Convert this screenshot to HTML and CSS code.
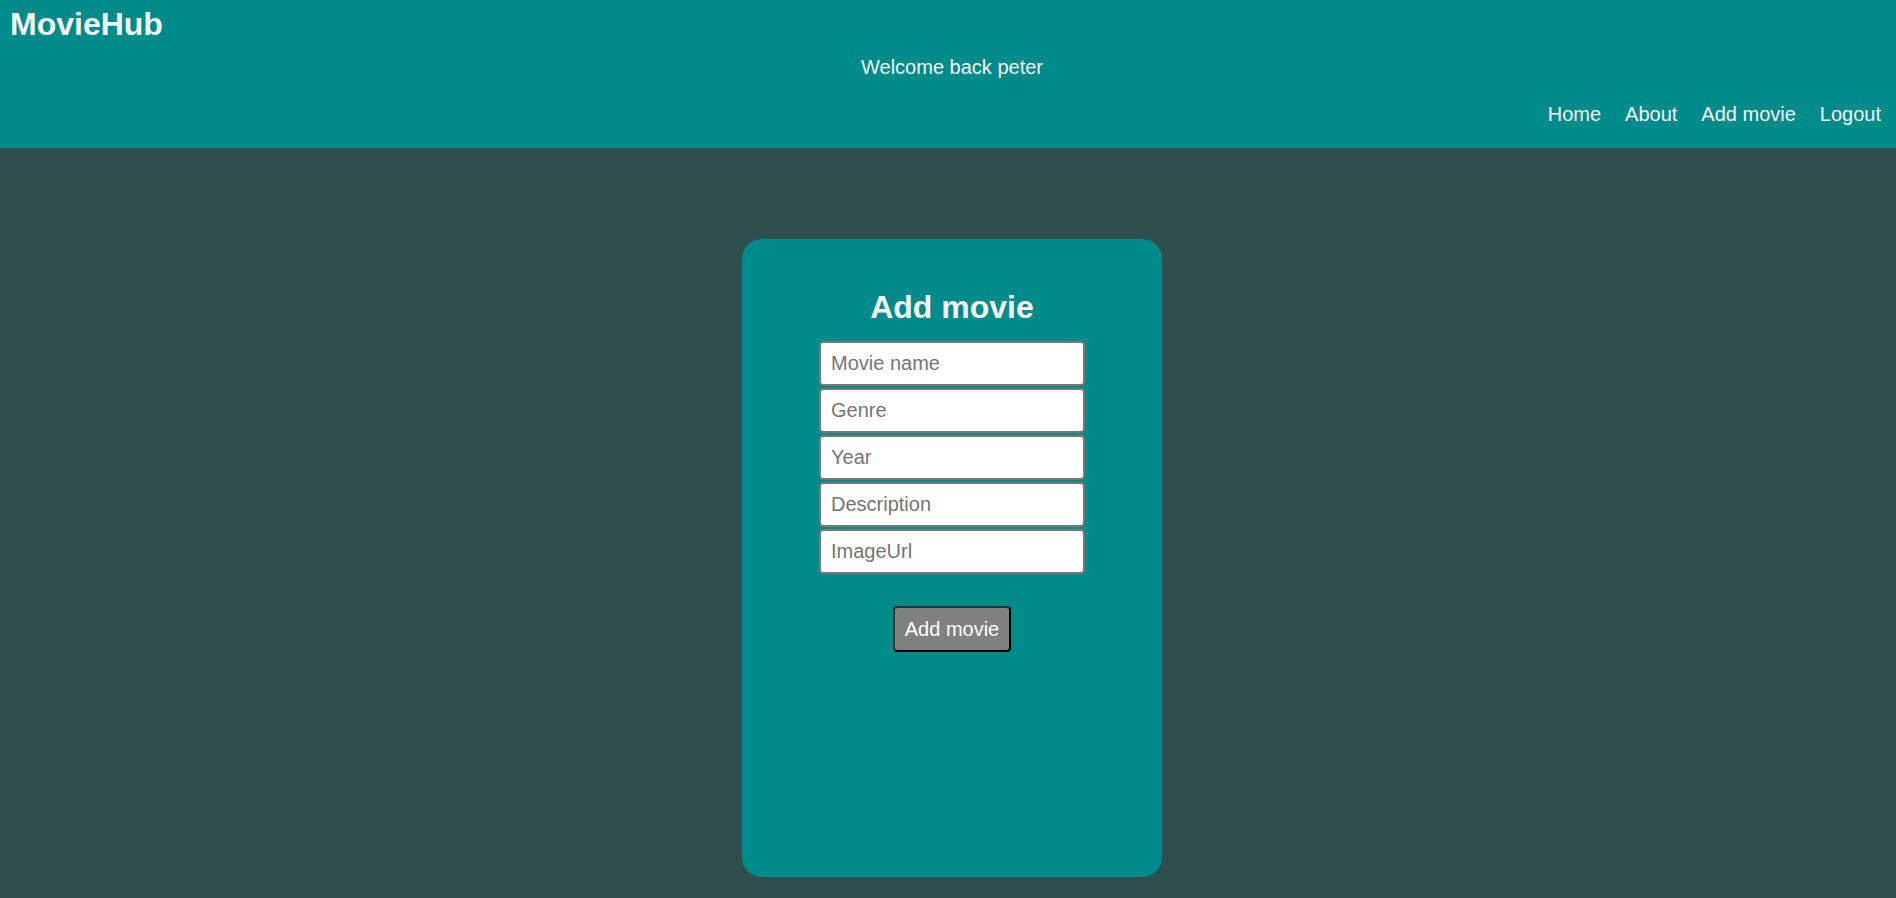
FILE: index.html
```html
<!DOCTYPE html>
<html lang="en">
<head>
<meta charset="utf-8">
<title>MovieHub</title>
<link rel="stylesheet" href="styles.css">
</head>
<body>
<header class="topbar">
  <h1 class="brand">MovieHub</h1>
  <p class="welcome">Welcome back peter</p>
  <nav class="nav">
    <a href="#">Home</a>
    <a href="#">About</a>
    <a href="#">Add movie</a>
    <a href="#">Logout</a>
  </nav>
</header>
<main class="main">
  <section class="card">
    <h2 class="card-title">Add movie</h2>
    <form class="form">
      <input class="field" type="text" placeholder="Movie name">
      <input class="field" type="text" placeholder="Genre">
      <input class="field" type="text" placeholder="Year">
      <input class="field" type="text" placeholder="Description">
      <input class="field" type="text" placeholder="ImageUrl">
      <button class="submit" type="button">Add movie</button>
    </form>
  </section>
</main>
</body>
</html>
```
FILE: styles.css
```css
html, body {
  margin: 0;
  padding: 0;
}
body {
  background: #2f4f4f;
  font-family: "Liberation Sans", Arial, sans-serif;
  color: #f5f5f5;
  overflow: hidden;
}
.topbar {
  background: #008b8b;
  height: 148px;
  box-sizing: border-box;
  padding: 6px 0 0 8px;
  display: flex;
  flex-direction: column;
}
.brand {
  margin: 0 0 0 2px;
  font-size: 32px;
  line-height: 37px;
  font-weight: bold;
  color: #f5f5f5;
}
.welcome {
  margin: 13px 0 0;
  font-size: 20px;
  line-height: 23px;
  text-align: center;
}
.nav {
  margin-top: 24px;
  display: flex;
  justify-content: flex-end;
  gap: 24px;
  padding-right: 15px;
}
.nav a {
  color: #f5f5f5;
  text-decoration: none;
  font-size: 20px;
  line-height: 23px;
}
.main {
  padding: 91px 0 0 8px;
}
.card {
  width: 420px;
  height: 638px;
  box-sizing: border-box;
  margin: 0 auto;
  background: #008b8b;
  border-radius: 20px;
  padding-top: 50px;
  display: flex;
  flex-direction: column;
  align-items: center;
}
.card-title {
  margin: 0 0 15px;
  font-size: 32px;
  line-height: 37px;
  font-weight: bold;
  color: #f5f5f5;
}
.form {
  display: flex;
  flex-direction: column;
  align-items: center;
  gap: 2px;
}
.field {
  width: 266px;
  height: 45px;
  box-sizing: border-box;
  border: 2px solid #777;
  border-radius: 4px;
  padding: 0 10px;
  background: #fff;
  font-family: "Liberation Sans", Arial, sans-serif;
  font-size: 20px;
  color: #333;
  outline: none;
}
.field::placeholder {
  color: #757575;
}
.submit {
  margin-top: 30px;
  height: 46px;
  box-sizing: border-box;
  padding: 0 10px;
  background: #808080;
  color: #fff;
  border: 2px solid #333;
  border-right-color: #000;
  border-bottom-color: #000;
  border-radius: 4px;
  font-family: "Liberation Sans", Arial, sans-serif;
  font-size: 20px;
  line-height: 23px;
}
```
